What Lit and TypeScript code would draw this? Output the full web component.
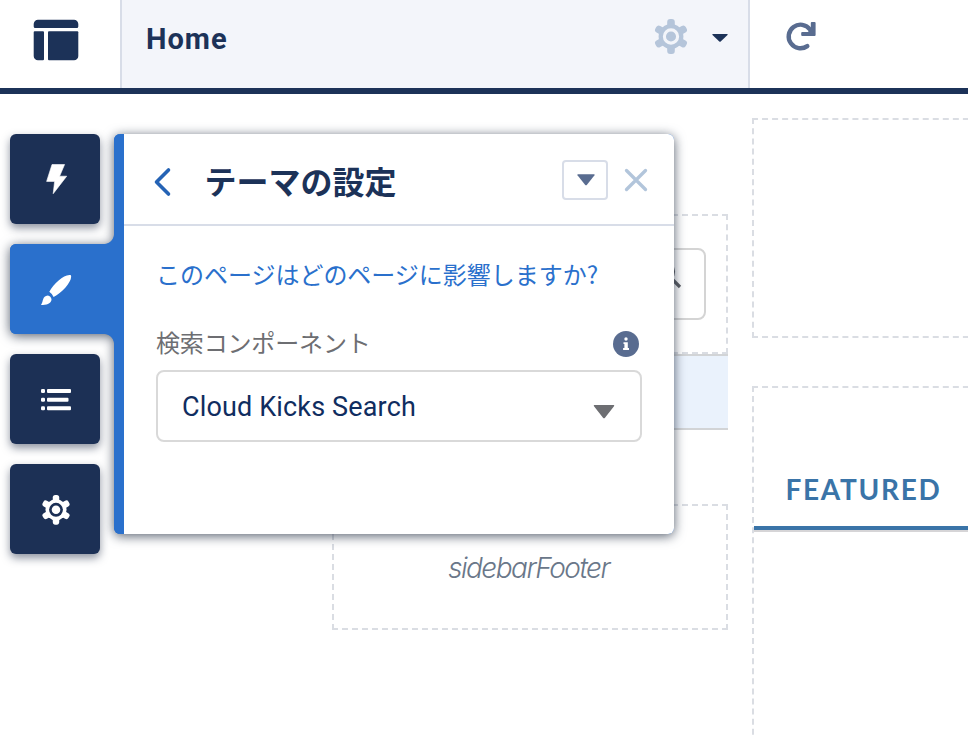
import { LitElement, html, css, svg } from "lit";
import { customElement } from "lit/decorators.js";
import { classMap } from "lit/directives/class-map.js";

/* Six-lobed gear: hub disc plus rounded teeth, with a ring cut out of the middle. */
const gear = (fill: string, ring: string) => svg`
  <g fill=${fill}>
    <circle cx="17" cy="17.5" r="12.4"></circle>
    ${[0, 60, 120].map(
      (a) => svg`<rect x="13.2" y="0" width="7.6" height="35" rx="3" transform=${`rotate(${a} 17 17.5)`}></rect>`
    )}
  </g>
  <circle cx="17" cy="17.5" r="6.6" fill=${fill} stroke=${ring} stroke-width="3.1"></circle>`;

const railIcons = {
  bolt: svg`<path fill="#fff" d="M12 .5 H24.600 L19.600 12.200 H26.700 L13.200 29.700 L14.600 17.400 H6.600 Z" stroke="#fff" stroke-width=".6" stroke-linejoin="round"></path>`,
  brush: svg`<path fill="#fff" d="M30.4 1 C24 0 14 9.500 9.300 17.700 Q12.200 19.600 13.600 23 C22 19 32.500 7 31 1.600 Q30.800 1.100 30.400 1Z M7.800 21.400 Q11 22.100 11.500 25.200 C11.600 29 7.800 31.300 1.500 30.900 Q0.700 30.600 1.500 29.900 C3.200 28 2.200 21.800 7.800 21.400Z"></path>`,
  list: svg`<g fill="#fff">
    <rect x="1" y="5" width="4" height="4" rx="1.300"></rect><rect x="7" y="5" width="24" height="4" rx="1"></rect>
    <rect x="1" y="13.800" width="4" height="4" rx="1.300"></rect><rect x="7" y="13.800" width="21.500" height="4" rx="1"></rect>
    <rect x="1" y="22.300" width="4" height="4" rx="1.300"></rect><rect x="7" y="22.300" width="24" height="4" rx="1"></rect></g>`,
  cog: svg`<g transform="translate(1.550 .9) scale(.85)">${gear("#fff", "#1c3055")}</g>`,
};

@customElement("builder-header")
class BuilderHeader extends LitElement {
  static styles = css`
    :host { display: flex; box-sizing: border-box; height: 94px; border-bottom: 6px solid #1c3258; background: #fff; }
    .logo { width: 120px; display: flex; }
    .logo svg { margin: 19px 0 0 33px; }
    .page { box-sizing: border-box; width: 630px; display: flex; align-items: flex-start; background: #f3f5fa;
      border: solid #d8dde8; border-width: 0 2px; padding-left: 24px; }
    .name { flex: 1; margin-top: 19px; font: 700 29px/40px Roboto, sans-serif; letter-spacing: 1px; color: #1c3258; }
    .gear { margin-top: 19px; }
    .caret { margin: 34px 20px 0 24px; }
    .reload { margin: 21px 0 0 35px; }
    svg { display: block; }
  `;
  render() {
    return html`
      <div class="logo">
        <svg width="46" height="42" viewBox="0 0 46 42" fill="#1c3258">
          <path d="M5 .7 H41 A4.300 4.300 0 0 1 45.300 5 V7.500 Q45.300 9 43.800 9 H2.200 Q.7 9 .7 7.500 V5 A4.300 4.300 0 0 1 5 .7Z"></path>
          <path d="M1.700 12.300 H10 Q11 12.300 11 13.300 V40.300 Q11 41.300 10 41.300 H5 A4.300 4.300 0 0 1 .7 37 V13.300 Q.7 12.300 1.700 12.300Z"></path>
          <path d="M16 12.300 H44.300 Q45.300 12.300 45.300 13.300 V37 A4.300 4.300 0 0 1 41 41.300 H16 Q15 41.300 15 40.300 V13.300 Q15 12.300 16 12.300Z"></path>
        </svg>
      </div>
      <div class="page">
        <span class="name">Home</span>
        <svg class="gear" width="34" height="36" viewBox="0 0 34 36">${gear("#b5c5da", "#f3f5fa")}</svg>
        <svg class="caret" width="16" height="8" viewBox="0 0 16 8"><path fill="#1c3258" d="M.8 0 H15.200 Q16 .2 15.500 .9 L8.700 7.600 Q8 8.100 7.300 7.600 L.5 .9 Q0 .2 .8 0Z"></path></svg>
      </div>
      <svg class="reload" width="32" height="32" viewBox="0 0 32 32">
        <path d="M22.300 25.100 A11.800 11.800 0 1 1 25 8.500 L27 12" fill="none" stroke="#596c90" stroke-width="4.400" stroke-linecap="round"></path>
        <path fill="#596c90" d="M26.800 1 H29.600 Q30.600 1 30.600 2 V14 Q30.600 15 29.600 15 H17.200 Q16.200 15 16.200 14 V12 Q16.200 11 17.200 11 H23 L25.800 8 V2 Q25.800 1 26.800 1Z"></path>
      </svg>`;
  }
}

@customElement("page-canvas")
class PageCanvas extends LitElement {
  static styles = css`
    :host { display: flex; gap: 24px; box-sizing: border-box; height: 642px; padding: 24px 0 0 332px; overflow: hidden; }
    .dashed { box-sizing: border-box; border: 2px dashed #dadde3; }
    .sidebar { flex: none; width: 396px; padding-top: 96px; }
    .search { height: 140px; padding: 32px 20px 0; }
    .input { box-sizing: border-box; height: 72px; border: 2px solid #d4d4d4; border-radius: 8px; display: flex;
      justify-content: flex-end; padding: 11px 22px 0 0; }
    .nav { box-sizing: border-box; height: 76px; background: #eaf2fc; border: solid #d2d4d6; border-width: 2px 0; }
    .footer { height: 126px; margin-top: 74px; padding: 2px 3px 0 0; display: flex; align-items: center; justify-content: center;
      font: italic 300 28px/34px Inter, "Liberation Sans", sans-serif; letter-spacing: -1.500px; color: #6a7789; }
    .main { flex: none; width: 960px; display: flex; flex-direction: column; gap: 48px; }
    .hero { flex: none; height: 220px; }
    .tabs { flex: none; height: 500px; padding-top: 78px; }
    .tab { height: 60px; border-bottom: 4px solid #3a74a8; box-shadow: 0 2px #d6d5d7; padding-left: 31.500px;
      font: 700 28px/46px Lato, sans-serif; letter-spacing: 1.700px; color: #3a74a8; }
  `;
  render() {
    return html`
      <div class="sidebar">
        <div class="search dashed">
          <div class="input">
            <svg width="28" height="28" viewBox="0 0 28 28" fill="none" stroke="#5c5f64" stroke-width="3.200">
              <circle cx="10.500" cy="10.500" r="9"></circle><path d="M17 17 L26 26"></path>
            </svg>
          </div>
        </div>
        <div class="nav"></div>
        <div class="footer dashed"><span>sidebarFooter</span></div>
      </div>
      <div class="main">
        <div class="hero dashed"></div>
        <div class="tabs dashed"><div class="tab">FEATURED</div></div>
      </div>`;
  }
}

@customElement("tool-rail")
class ToolRail extends LitElement {
  static styles = css`
    :host { display: flex; flex-direction: column; gap: 20px; width: 104px; }
    .item { position: relative; z-index: 2; width: 90px; height: 90px; border-radius: 6px; background: #1c3055;
      box-shadow: 0 4px 8px rgba(28, 40, 65, .5); display: flex; align-items: center; }
    .item svg { margin: 2px 0 0 30px; }
    .active { width: 114px; z-index: 1; background: #2a70cc; border-radius: 6px 0 0 6px; box-shadow: none; }
    .active::before, .active::after { content: ""; position: absolute; right: 10px; width: 10px; height: 10px; }
    .active::before { top: -10px; background: radial-gradient(circle at 0 0, transparent 9.500px, #2a70cc 10.300px); }
    .active::after { bottom: -10px; background: radial-gradient(circle at 0 100%, transparent 9.500px, #2a70cc 10.300px); }
  `;
  render() {
    return (Object.keys(railIcons) as (keyof typeof railIcons)[]).map(
      (k) => html`<div class=${classMap({ item: true, active: k === "brush" })}>
        <svg width="32" height="32" viewBox="0 0 32 32">${railIcons[k]}</svg>
      </div>`
    );
  }
}

@customElement("theme-panel")
class ThemePanel extends LitElement {
  static styles = css`
    :host { display: block; box-sizing: border-box; width: 560px; height: 400px; background: #fff;
      border-left: 10px solid #2a70cc; border-radius: 6px; font-family: Roboto, "Noto Sans CJK JP", sans-serif; }
    svg { display: block; }
    .head { box-sizing: border-box; height: 92px; border-bottom: 2px solid #d8dde8; display: flex; align-items: center;
      padding: 2px 26px 0 29px; }
    .back { margin-top: 3px; }
    .title { flex: 1; margin: 0 0 0 31.500px; font: 700 32px/48px "Noto Sans CJK JP", sans-serif; color: #1c3258; }
    .menu { box-sizing: border-box; width: 46px; height: 40px; border: 2px solid #d8dde8; border-radius: 4px;
      display: flex; align-items: center; justify-content: center; margin-right: 16px; }
    .menu svg { margin-left: 2px; }
    .body { padding: 29px 32px; }
    .link { font: 400 24px/38px "Noto Sans CJK JP", sans-serif; letter-spacing: -.02px; color: #2a70cc; white-space: nowrap; }
    .row { display: flex; align-items: center; justify-content: space-between; margin-top: 31px; height: 40px; padding-right: 3px; }
    .label { margin-top: -4px; font: 400 24px/40px "Noto Sans CJK JP", sans-serif; letter-spacing: -.16px; color: #6d6e72; }
    .select { box-sizing: border-box; height: 72px; margin-top: 6px; border: 2px solid #d9d9d9; border-radius: 8px;
      display: flex; align-items: center; justify-content: space-between; padding: 2px 25px 0 24px;
      font: 400 27px/40px Roboto, sans-serif; letter-spacing: .15px; color: #102d60; }
    .select svg { margin-top: 10px; }
  `;
  render() {
    return html`
      <div class="head">
        <svg class="back" width="20" height="30" viewBox="0 0 20 30"><path d="M15.500 3 L3.500 15 L15.500 27" fill="none" stroke="#2563b5" stroke-width="3.600" stroke-linecap="round" stroke-linejoin="round"></path></svg>
        <span class="title">テーマの設定</span>
        <div class="menu"><svg width="18" height="12" viewBox="0 0 18 12"><path fill="#596c90" d="M.8 .3 H17.200 Q18 .6 17.500 1.300 L10 10.700 Q9 11.800 8 10.700 L.5 1.300 Q0 .6 .8 .3Z"></path></svg></div>
        <svg width="24" height="24" viewBox="0 0 24 24"><path d="M2.500 2.500 L21.500 21.500 M21.500 2.500 L2.500 21.500" stroke="#b2c5db" stroke-width="3.300" stroke-linecap="round"></path></svg>
      </div>
      <div class="body">
        <div class="link">このページはどのページに影響しますか?</div>
        <div class="row">
          <span class="label">検索コンポーネント</span>
          <svg width="26" height="26" viewBox="0 0 26 26">
            <circle cx="13" cy="13" r="13" fill="#596c90"></circle>
            <circle cx="13" cy="8" r="1.700" fill="#fff"></circle>
            <path fill="#fff" d="M10.500 11.200 H14.800 V17 H16 V18.900 H10.100 V17 H11.400 V13 H10.500Z"></path>
          </svg>
        </div>
        <div class="select">
          <span>Cloud Kicks Search</span>
          <svg width="22" height="14" viewBox="0 0 22 14"><path fill="#6d6e72" d="M1.300 0 H20.700 Q21.800 .2 21 1.200 L12 12.700 Q11 13.800 10 12.700 L1 1.200 Q.2 .2 1.300 0Z"></path></svg>
        </div>
      </div>`;
  }
}

@customElement("app-root")
class AppRoot extends LitElement {
  static styles = css`
    :host { display: block; width: 968px; height: 736px; overflow: hidden; background: #fff; }
    .stage { position: relative; }
    .overlay { position: absolute; left: 10px; top: 40px; display: flex; }
    tool-rail { position: relative; z-index: 1; }
    .shadow { position: absolute; inset: 0; filter: drop-shadow(0 2px 6px rgba(28, 40, 60, .75)); }
    .shadow .body { position: absolute; left: 104px; top: 0; width: 560px; height: 400px; border-radius: 6px; background: #2a70cc; }
    .shadow .tab { position: absolute; left: 0; top: 110px; width: 114px; height: 90px; border-radius: 6px; background: #2a70cc; }
    theme-panel { position: relative; z-index: 2; }
  `;
  render() {
    return html`
      <builder-header></builder-header>
      <div class="stage">
        <page-canvas></page-canvas>
        <div class="overlay">
          <div class="shadow"><div class="body"></div><div class="tab"></div></div>
          <tool-rail></tool-rail>
          <theme-panel></theme-panel>
        </div>
      </div>`;
  }
}
